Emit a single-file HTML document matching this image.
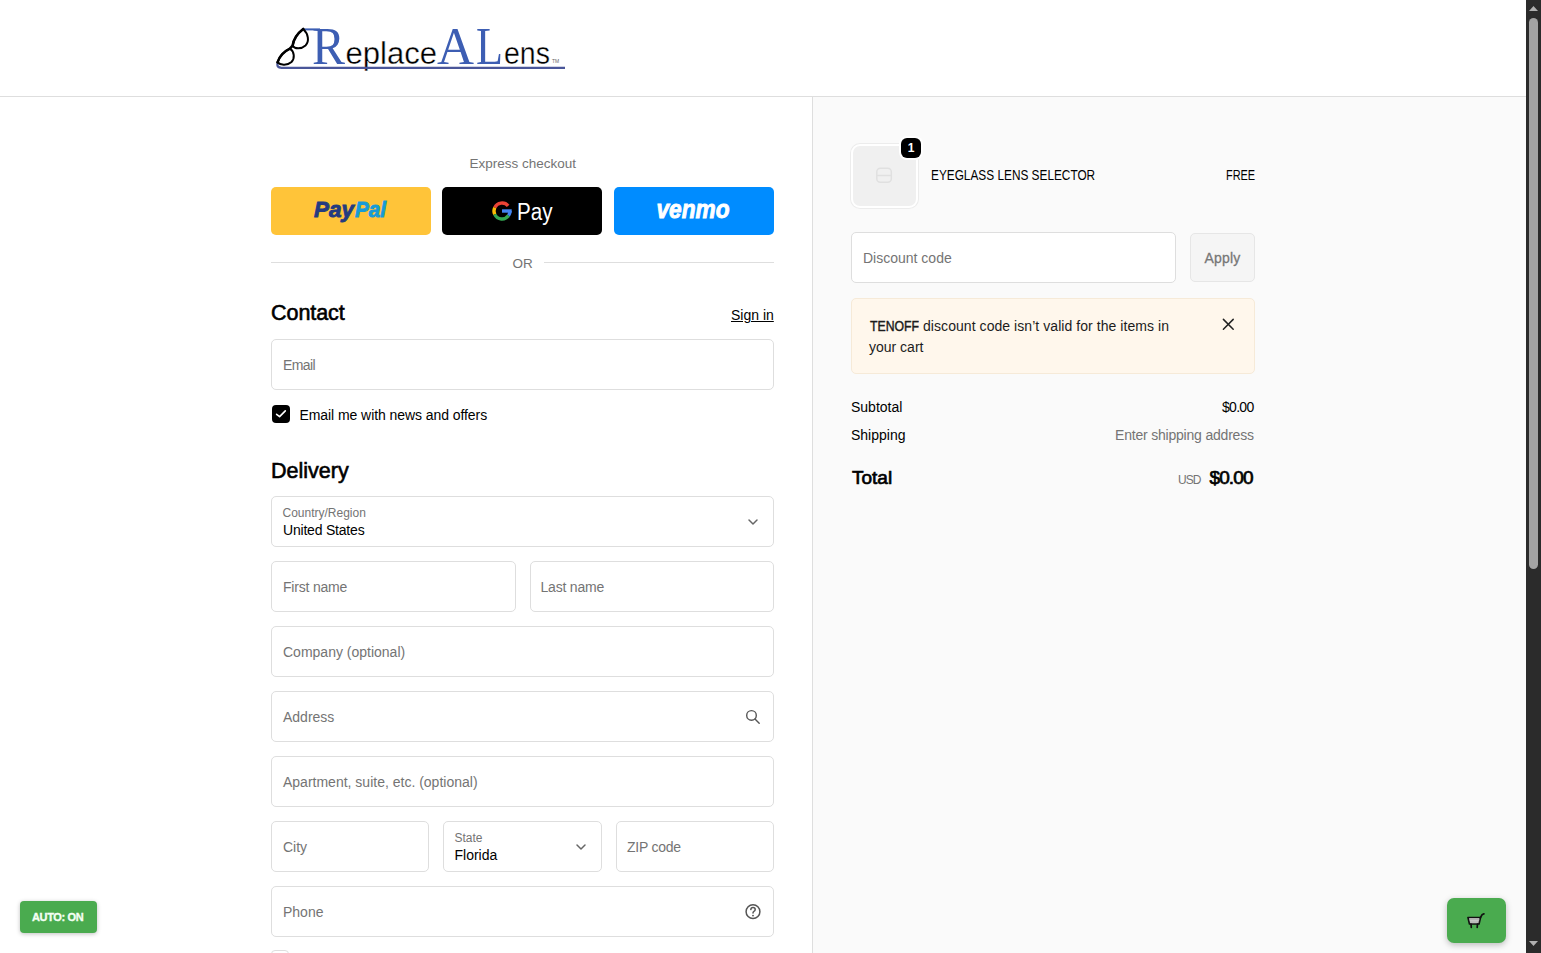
<!DOCTYPE html>
<html><head><meta charset="utf-8">
<style>
*{box-sizing:border-box;margin:0;padding:0}
html,body{width:1541px;height:953px;overflow:hidden;background:#fff;font-family:"Liberation Sans",sans-serif;color:#000}
.a{position:absolute}
.t{position:absolute;white-space:nowrap;line-height:1;font-size:14px}
.g{color:#747474}
#header{left:0;top:0;width:1526px;height:97px;background:#fff;border-bottom:1px solid #dedede}
#side{left:812px;top:97px;width:714px;height:856px;background:#fafafa;border-left:1px solid #dedede}
#sb{left:1526px;top:0;width:15px;height:953px;background:#2b2b2b}
#thumb{left:1529px;top:18px;width:9px;height:551px;background:#a3a3a3;border-radius:4.5px}
.f{position:absolute;border:1px solid #dedede;border-radius:5px;background:#fff;height:51px}
.btn{position:absolute;top:187px;width:160px;height:48px;border-radius:5px}
</style></head><body>
<div id="header" class="a"></div>
<div id="side" class="a"></div>
<div id="sb" class="a"></div>
<div id="thumb" class="a"></div>
<svg class="a" style="left:1526px;top:0" width="15" height="953">
  <path d="M3 11 L7.5 6 L12 11 Z" fill="#b0b0b0"/>
  <path d="M3 941 L7.5 946 L12 941 Z" fill="#b0b0b0"/>
</svg>

<!-- logo -->
<svg class="a" style="left:270px;top:20px" width="310" height="60" viewBox="0 0 310 60">
  <text x="42" y="43.6" font-family="Liberation Serif" font-size="53" fill="#3d5eb3" textLength="33" lengthAdjust="spacingAndGlyphs">R</text>
  <text x="167" y="43.6" font-family="Liberation Serif" font-size="53" fill="#3d5eb3" textLength="37" lengthAdjust="spacingAndGlyphs">A</text>
  <text x="206" y="43.6" font-family="Liberation Serif" font-size="53" fill="#3d5eb3" textLength="27" lengthAdjust="spacingAndGlyphs">L</text>
  <text x="75.5" y="43.6" font-family="Liberation Sans" font-size="31" fill="#000" stroke="#fff" stroke-width="0.35" textLength="91.5" lengthAdjust="spacingAndGlyphs">eplace</text>
  <text x="234" y="43.6" font-family="Liberation Sans" font-size="31" fill="#000" stroke="#fff" stroke-width="0.35" textLength="46" lengthAdjust="spacingAndGlyphs">ens</text>
  <text x="282" y="43" font-family="Liberation Sans" font-size="5" fill="#666">TM</text>
  <path d="M7.8 42.5 Q6.2 47.8 11.5 47.8 L295 47.8" stroke="#4a5699" stroke-width="2.3" fill="none"/>
  <path d="M33.5 9.4 H50" stroke="#3d5eb3" stroke-width="2"/>
  <g stroke="#000" stroke-width="2" fill="none" stroke-linejoin="round" stroke-linecap="round">
    <path d="M33.2 9 C28 13 23.5 19 22.6 25.7 C24.5 29 31 29.5 35.5 25.5 C39.5 21.5 38.5 14 33.2 9 Z"/>
    <path d="M19.9 28.7 C14 31.5 9.5 36.5 7.5 42.3 C10 45 17 46 21.5 42 C25 38.5 24.5 31.5 19.9 28.7 Z"/>
    <path d="M33.2 9 C28 13 23.5 19 22.6 25.7 L19.9 28.7 C14 31.5 9.5 36.5 7.5 42.3" stroke-width="2.6"/>
  </g>
</svg>

<!-- express checkout -->
<div class="t g" style="left:469.5px;top:157px;font-size:13.5px">Express checkout</div>
<div class="btn" style="left:271px;background:#ffc439"></div>
<div class="btn" style="left:442px;background:#000"></div>
<div class="btn" style="left:614px;background:#008cff"></div>
<svg class="a" style="left:271px;top:187px" width="160" height="48">
  <text x="43" y="29.6" font-family="Liberation Sans" font-weight="bold" font-style="italic" font-size="22.5" fill="#253b80" stroke="#253b80" stroke-width="0.9" textLength="40" lengthAdjust="spacingAndGlyphs">Pay</text>
  <text x="84" y="29.6" font-family="Liberation Sans" font-weight="bold" font-style="italic" font-size="22.5" fill="#179bd7" stroke="#179bd7" stroke-width="0.9" textLength="31" lengthAdjust="spacingAndGlyphs">Pal</text>
</svg>
<svg class="a" style="left:442px;top:187px" width="160" height="48">
  <g fill="none" stroke-width="3.4">
    <path d="M66.13 18.86 A8 8 0 0 0 52.75 20.62" stroke="#ea4335"/>
    <path d="M52.75 20.62 A8 8 0 0 0 52.75 27.38" stroke="#fbbc05"/>
    <path d="M52.75 27.38 A8 8 0 0 0 66.55 28.59" stroke="#34a853"/>
    <path d="M66.55 28.59 A8 8 0 0 0 68 24" stroke="#4285f4"/>
  </g>
  <rect x="60" y="22.3" width="9.7" height="3.4" fill="#4285f4"/>
  <text x="75" y="33" font-family="Liberation Sans" font-size="23" fill="#fff" textLength="35.5" lengthAdjust="spacingAndGlyphs">Pay</text>
</svg>
<svg class="a" style="left:614px;top:187px" width="160" height="48">
  <text x="42.5" y="31.3" font-family="Liberation Sans" font-weight="bold" font-style="italic" font-size="26" fill="#fff" stroke="#fff" stroke-width="0.9" textLength="73" lengthAdjust="spacingAndGlyphs">venmo</text>
</svg>

<div class="a" style="left:271px;top:262px;width:229px;height:1px;background:#dedede"></div>
<div class="a" style="left:544px;top:262px;width:230px;height:1px;background:#dedede"></div>
<div class="t g" style="left:512.5px;top:257px;font-size:13.5px">OR</div>

<!-- contact -->
<div class="t" style="left:271px;top:303px;font-size:21.5px;-webkit-text-stroke:0.6px #000;letter-spacing:-0.05px">Contact</div>
<div class="t" style="left:731px;top:308px;text-decoration:underline">Sign in</div>
<div class="f" style="left:271px;top:339px;width:503px"></div>
<div class="t g" style="left:283px;top:358px;letter-spacing:-0.6px">Email</div>
<div class="a" style="left:272px;top:405px;width:18px;height:18px;background:#000;border-radius:4px"></div>
<svg class="a" style="left:272px;top:405px" width="18" height="18"><path d="M4.6 9.3 L7.6 11.6 L13.3 5.9" stroke="#fff" stroke-width="1.6" fill="none" stroke-linecap="round" stroke-linejoin="round"/></svg>
<div class="t" style="left:299.5px;top:408px;letter-spacing:-0.07px">Email me with news and offers</div>

<!-- delivery -->
<div class="t" style="left:271px;top:461px;font-size:21.5px;-webkit-text-stroke:0.6px #000;letter-spacing:0px">Delivery</div>
<div class="f" style="left:271px;top:496px;width:503px"></div>
<div class="t g" style="left:282.5px;top:507px;font-size:12px">Country/Region</div>
<div class="t" style="left:283px;top:523px;letter-spacing:-0.2px">United States</div>
<svg class="a" style="left:745px;top:515px" width="16" height="12"><path d="M4 5 L8 9 L12 5" stroke="#666" stroke-width="1.5" fill="none" stroke-linecap="round" stroke-linejoin="round"/></svg>

<div class="f" style="left:271px;top:561px;width:245px"></div>
<div class="t g" style="left:283px;top:580px;letter-spacing:-0.2px">First name</div>
<div class="f" style="left:530px;top:561px;width:244px"></div>
<div class="t g" style="left:540.5px;top:580px;letter-spacing:-0.2px">Last name</div>
<div class="f" style="left:271px;top:626px;width:503px"></div>
<div class="t g" style="left:283px;top:645px">Company (optional)</div>
<div class="f" style="left:271px;top:691px;width:503px"></div>
<div class="t g" style="left:283px;top:710px">Address</div>
<svg class="a" style="left:743px;top:707px" width="20" height="20"><circle cx="8.5" cy="8.4" r="4.8" stroke="#555" stroke-width="1.4" fill="none"/><path d="M12 12 L16.2 16.2" stroke="#555" stroke-width="1.4" stroke-linecap="round"/></svg>
<div class="f" style="left:271px;top:756px;width:503px"></div>
<div class="t g" style="left:283px;top:775px">Apartment, suite, etc. (optional)</div>
<div class="f" style="left:271px;top:821px;width:158px"></div>
<div class="t g" style="left:283px;top:840px">City</div>
<div class="f" style="left:443px;top:821px;width:159px"></div>
<div class="t g" style="left:454.5px;top:832px;font-size:12px">State</div>
<div class="t" style="left:454.5px;top:848px">Florida</div>
<svg class="a" style="left:573px;top:840px" width="16" height="12"><path d="M4 5 L8 9 L12 5" stroke="#666" stroke-width="1.5" fill="none" stroke-linecap="round" stroke-linejoin="round"/></svg>
<div class="f" style="left:616px;top:821px;width:158px"></div>
<div class="t g" style="left:627px;top:840px;letter-spacing:-0.25px">ZIP code</div>
<div class="f" style="left:271px;top:886px;width:503px"></div>
<div class="t g" style="left:283px;top:905px">Phone</div>
<svg class="a" style="left:743px;top:902px" width="20" height="20"><circle cx="10" cy="9.7" r="6.9" stroke="#555" stroke-width="1.5" fill="none"/><path d="M7.8 7.6 Q7.9 5.4 10 5.4 Q12.2 5.4 12.2 7.4 Q12.2 8.6 10.9 9.3 Q10 9.8 10 11" stroke="#555" stroke-width="1.5" fill="none" stroke-linecap="round"/><circle cx="10" cy="13.6" r="0.95" fill="#555"/></svg>
<div class="a" style="left:271px;top:950px;width:18px;height:18px;border:1px solid #dedede;border-radius:4px;background:#fff"></div>

<!-- sidebar -->
<div class="a" style="left:851px;top:144px;width:67px;height:64px;border-radius:9px;background:#fff;box-shadow:0 0 0 1px #ececec"></div>
<div class="a" style="left:853px;top:146px;width:63px;height:60px;border-radius:7px;background:#f0f0f0"></div>
<svg class="a" style="left:873px;top:165px" width="22" height="20"><g stroke="#e0e0e0" stroke-width="1.5" fill="none"><rect x="3.8" y="3.2" width="14.5" height="14" rx="3.5"/><path d="M3.8 10.5 H18.3"/></g></svg>
<div class="a" style="left:899px;top:136px;width:24px;height:24px;border-radius:8px;background:#fff"></div>
<div class="a" style="left:901px;top:138px;width:20px;height:20px;border-radius:6px;background:#000"></div>
<div class="t" style="left:901px;top:142px;width:20px;text-align:center;font-size:12px;font-weight:bold;color:#fff">1</div>
<div class="t" style="left:930.5px;top:168px;transform:scaleX(0.845);transform-origin:0 0">EYEGLASS LENS SELECTOR</div>
<div class="t" style="left:1225.5px;top:168px;transform:scaleX(0.78);transform-origin:0 0">FREE</div>
<div class="f" style="left:851px;top:232px;width:325px"></div>
<div class="t g" style="left:863px;top:251px">Discount code</div>
<div class="a" style="left:1190px;top:233px;width:65px;height:49px;border:1px solid #e6e6e6;border-radius:5px;background:#f5f5f5"></div>
<div class="t" style="left:1204.5px;top:251px;color:#777;-webkit-text-stroke:0.3px #777;letter-spacing:0.2px">Apply</div>
<div class="a" style="left:851px;top:298px;width:404px;height:76px;border:1px solid #f6ead8;border-radius:5px;background:#fff7ec"></div>
<div class="t" style="left:869.5px;top:319px;color:#1c1c1c;-webkit-text-stroke:0.45px #1c1c1c;transform:scaleX(0.875);transform-origin:0 0">TENOFF</div>
<div class="t" style="left:923px;top:319px;color:#1c1c1c;letter-spacing:0.06px">discount code isn’t valid for the items in</div>
<div class="t" style="left:869px;top:340px;color:#1c1c1c">your cart</div>
<svg class="a" style="left:1218px;top:314px" width="20" height="20"><path d="M5.4 5.4 L15.2 15.2 M15.2 5.4 L5.4 15.2" stroke="#222" stroke-width="1.5" stroke-linecap="round"/></svg>
<div class="t" style="left:851px;top:400px">Subtotal</div>
<div class="t" style="left:1222px;top:400px;letter-spacing:-0.7px">$0.00</div>
<div class="t" style="left:851px;top:428px">Shipping</div>
<div class="t g" style="left:1115px;top:428px;letter-spacing:-0.2px">Enter shipping address</div>
<div class="t" style="left:852px;top:468px;font-size:19px;-webkit-text-stroke:0.7px #000">Total</div>
<div class="t g" style="left:1178px;top:474px;font-size:12px;letter-spacing:-0.9px">USD</div>
<div class="t" style="left:1209.5px;top:468px;font-size:19px;-webkit-text-stroke:0.7px #000;letter-spacing:-0.9px">$0.00</div>

<!-- floating -->
<div class="a" style="left:20px;top:901px;width:77px;height:32px;border-radius:4px;background:#4aab4f;box-shadow:0 1px 4px rgba(0,0,0,.25)"></div>
<div class="t" style="left:32px;top:912px;font-size:11px;font-weight:bold;color:#f4fff4;-webkit-text-stroke:0.35px #f4fff4;letter-spacing:-0.35px">AUTO: ON</div>
<div class="a" style="left:1447px;top:898px;width:59px;height:45px;border-radius:7px;background:#4aab4f;box-shadow:0 2px 6px rgba(0,0,0,.25)"></div>
<svg class="a" style="left:1465px;top:910px" width="22" height="20"><g fill="none" stroke="#111" stroke-width="1.7" stroke-linejoin="round" stroke-linecap="round"><path d="M3 7.5 H15.5 L14 14 H4.5 Z" fill="#e6e6e6"/><path d="M15.5 7.5 L17 4.8 L19 3.8"/><path d="M6 14 L6.3 17.3 M12.5 14 L12.2 17.3"/></g><path d="M4.3 9.9 H14.6 M4.8 12 H14.2" stroke="#8a8a8a" stroke-width="0.9"/></svg>
</body></html>
